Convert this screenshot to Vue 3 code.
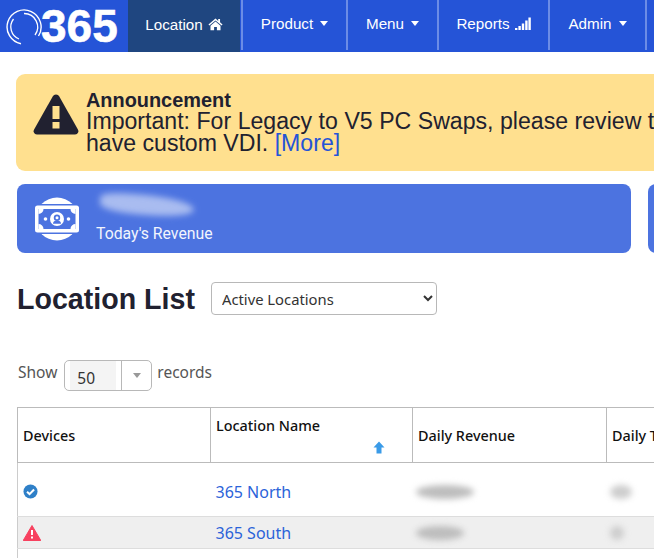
<template>
  <div class="page">
    <nav class="navbar">
      <div class="brand">
        <svg class="brand-ring" viewBox="6 6 36 36" width="36" height="36" fill="none" stroke="#fff">
          <path d="M21 40.700A17 17 0 1 1 38.500 33" stroke-width="1.400" />
          <path d="M24 10.500A13.500 13.500 0 0 1 35 32" stroke-width="1.300" />
          <path d="M13.500 16A13 13 0 0 0 19 36" stroke-width="1.300" />
        </svg>
        <span class="brand-text">365</span>
      </div>
      <template v-for="item in navItems" :key="item.label">
        <a class="nav-item" :class="{ active: item.active }" :style="{ width: item.width + 'px' }">
          {{ item.label }}
          <svg v-if="item.icon === 'home'" class="nav-icon" viewBox="0 0 16 14" width="15" height="13" fill="#fff">
            <path d="M8 0.600 0.400 7l1 1.100L8 2.600l6.600 5.500 1-1.100-2.700-2.300V1.200h-2v2.100z" />
            <path d="M8 3.900 2.600 8.400v4.900h3.900V9.700h3v3.600h3.900V8.400z" />
          </svg>
          <svg v-else-if="item.icon === 'signal'" class="nav-icon" viewBox="0 0 16 14" width="16" height="14" fill="#fff">
            <rect x="0" y="11" width="2.400" height="2" />
            <rect x="3.400" y="9" width="2.400" height="4" />
            <rect x="6.800" y="6.500" width="2.400" height="6.500" />
            <rect x="10.200" y="3.500" width="2.400" height="9.500" />
            <rect x="13.400" y="0.500" width="2.400" height="12.500" />
          </svg>
          <span v-else class="caret"></span>
        </a>
        <span v-if="item.active" class="nav-sep"></span>
      </template>
    </nav>

    <div class="content">
      <div class="announcement">
        <svg class="warn-icon" viewBox="0 0 46 42" width="46" height="42">
          <path d="M23 1.500c1.500 0 2.600.8 3.300 2l18.600 33c1.300 2.400-.3 5-3 5H4.100c-2.700 0-4.300-2.600-3-5l18.600-33c.7-1.200 1.800-2 3.300-2z" fill="#212130" />
          <rect x="19.500" y="13" width="7" height="13" fill="#ffe08f" />
          <rect x="19.500" y="29" width="7" height="6.500" fill="#ffe08f" />
        </svg>
        <div class="announcement-text">
          <strong>Announcement</strong>
          <p><span class="first-line">Important: For Legacy to V5 PC Swaps, please review t</span><br />have custom VDI. <a>[More]</a></p>
        </div>
      </div>

      <div class="stats">
        <div class="stat-card">
          <svg class="money-icon" viewBox="0 0 44 44" width="44" height="44">
            <circle cx="22" cy="22" r="21.500" fill="#fff" />
            <rect x="0" y="7" width="44" height="30" fill="#4c73e0" />
            <rect x="0" y="8.500" width="44" height="27" rx="2.500" fill="#fff" />
            <rect x="3.500" y="12" width="37" height="20" fill="#4c73e0" />
            <path d="M3.500 12h5a5 5 0 0 1-5 5zM40.500 12h-5a5 5 0 0 0 5 5zM3.500 32h5a5 5 0 0 0-5-5zM40.500 32h-5a5 5 0 0 1 5-5z" fill="#fff" />
            <circle cx="22" cy="22" r="7" fill="#fff" />
            <circle cx="22" cy="20.800" r="3.200" fill="#4c73e0" />
            <circle cx="22" cy="20.800" r="1.500" fill="#fff" />
            <path d="M18 26.800c0-2.600 1.600-3.400 4-3.400s4 .8 4 3.400z" fill="#4c73e0" />
            <circle cx="10.500" cy="22" r="1.800" fill="#fff" />
            <circle cx="33.500" cy="22" r="1.800" fill="#fff" />
          </svg>
          <div class="stat-body">
            <div class="stat-smear"></div>
            <div class="stat-label">Today's Revenue</div>
          </div>
        </div>
        <div class="stat-card"></div>
      </div>

      <div class="list-head">
        <h1>Location List</h1>
        <select class="status-select">
          <option>Active Locations</option>
        </select>
      </div>

      <div class="length-row">
        <span>Show</span>
        <div class="length-box">
          <span class="length-value">50</span>
          <span class="length-arrow"><i></i></span>
        </div>
        <span class="records">records</span>
      </div>
    </div>

    <table class="locations">
      <colgroup>
        <col class="col-devices" />
        <col class="col-name" />
        <col class="col-rev" />
        <col class="col-tx" />
      </colgroup>
      <thead>
        <tr>
          <th>Devices</th>
          <th class="sorted">
            Location Name
            <svg class="sort-arrow" viewBox="0 0 12 13" width="12" height="13" fill="#3a9be8">
              <path d="M6 0.500 11.500 6.500H8.500V12.500H3.500V6.500H0.500z" />
            </svg>
          </th>
          <th>Daily Revenue</th>
          <th>Daily T</th>
        </tr>
      </thead>
      <tbody>
        <tr v-for="row in rows" :key="row.name" :class="row.cls">
          <td>
            <svg v-if="row.ok" viewBox="0 0 16 16" width="15" height="15">
              <circle cx="8" cy="8" r="7.500" fill="#2f80c8" />
              <path d="M4.300 8.200 7 10.800 11.800 5.800" fill="none" stroke="#fff" stroke-width="2.200" />
            </svg>
            <svg v-else viewBox="0 0 18 16" width="18" height="16">
              <path d="M9 0.500 17.800 15.500H0.200z" fill="#f7415f" stroke="#f7415f" stroke-linejoin="round" />
              <rect x="8" y="5" width="2" height="5" fill="#fff" />
              <rect x="8" y="11.500" width="2" height="2" fill="#fff" />
            </svg>
          </td>
          <td><a>{{ row.name }}</a></td>
          <td><div class="smear" :style="{ width: row.rev + 'px' }"></div></td>
          <td><div class="smear small" :style="{ width: row.tx + 'px' }"></div></td>
        </tr>
        <tr class="row-blank"><td colspan="4"></td></tr>
      </tbody>
    </table>
  </div>
</template>

<script setup>
const navItems = [
  { label: 'Location', icon: 'home', active: true, width: 112 },
  { label: 'Product', width: 105 },
  { label: 'Menu', width: 91 },
  { label: 'Reports', icon: 'signal', width: 111 },
  { label: 'Admin', width: 97 }
]

const rows = [
  { name: '365 North', ok: true, cls: 'row-one', rev: 58, tx: 22 },
  { name: '365 South', ok: false, cls: 'row-two', rev: 48, tx: 14 }
]
</script>

<style>
html,
body {
  margin: 0;
  background: #fff;
  overflow: hidden;
}
</style>

<style scoped>
.page {
  width: 654px;
  height: 558px;
  overflow: hidden;
  font-family: "Liberation Sans", Arial, sans-serif;
  color: #212130;
}

.navbar {
  display: flex;
  height: 52px;
  background: #2554d7;
}

.brand {
  flex: 0 0 128px;
  display: flex;
  align-items: center;
  padding-left: 6px;
  box-sizing: border-box;
  color: #fff;
}

.brand-ring {
  flex: none;
  margin-top: 1px;
}

.brand-text {
  font-size: 46px;
  font-weight: 700;
  margin-left: -1px;
  -webkit-text-stroke: 0.6px #fff;
}

.nav-item {
  flex: none;
  box-sizing: border-box;
  height: 50px;
  padding-bottom: 3px;
  display: flex;
  align-items: center;
  justify-content: center;
  gap: 5px;
  color: #fff;
  font-size: 15.200px;
  border-right: 2px solid #6c8ce6;
}

.nav-item.active {
  height: 52px;
  border-right: none;
  background: #1f4680;
}

.nav-sep {
  flex: none;
  width: 2px;
  height: 50px;
  margin-left: 1px;
  background: #6c8ce6;
}

.nav-icon {
  flex: none;
}

.caret {
  width: 0;
  height: 0;
  margin-left: 2px;
  border-left: 4.500px solid transparent;
  border-right: 4.500px solid transparent;
  border-top: 5px solid #fff;
}

.content {
  padding: 22px 0 0 16px;
}

.announcement {
  box-sizing: border-box;
  width: 760px;
  height: 97px;
  display: flex;
  gap: 7px;
  padding: 16px 0 0 17px;
  background: #ffe08f;
  border-radius: 9px;
}

.warn-icon {
  flex: none;
  margin-top: 3px;
}

.announcement-text {
  white-space: nowrap;
}

.announcement-text strong {
  display: block;
  font-size: 19.900px;
  line-height: 20px;
}

.announcement-text p {
  margin: 0;
  font-size: 23.100px;
  line-height: 22px;
}

.first-line {
  word-spacing: 0.100px;
}

.announcement-text a {
  color: #2554d7;
}

.stats {
  display: flex;
  gap: 17px;
  margin: 13px 0 0 1px;
}

.stat-card {
  flex: 0 0 614px;
  box-sizing: border-box;
  height: 69px;
  display: flex;
  align-items: center;
  padding-left: 18px;
  background: #4c73e0;
  border-radius: 8px;
}

.money-icon {
  flex: none;
}

.stat-body {
  margin-left: 17px;
  color: #f2f5fd;
}

.stat-smear {
  width: 94px;
  height: 20px;
  margin-left: 4px;
  background: #a9bcf0;
  border-radius: 30% 70% 50% 50%;
  filter: blur(3px);
  transform: rotate(4deg);
}

.stat-label {
  margin-top: 9px;
  font-family: Roboto, sans-serif;
  font-size: 15.800px;
}

.list-head {
  display: flex;
  align-items: center;
  gap: 16px;
  height: 32px;
  margin: 30px 0 0 1px;
}

.list-head h1 {
  margin: 1px 0 0;
  font-size: 28.600px;
  font-weight: 700;
  color: #212130;
}

.status-select {
  width: 226px;
  height: 33px;
  margin-top: -1px;
  padding-left: 6px;
  background: #fff;
  border: 1px solid #b8b8b8;
  border-radius: 4px;
  font-family: "Noto Sans", sans-serif;
  font-size: 14.800px;
  color: #333;
}

.length-row {
  display: flex;
  align-items: center;
  gap: 7px;
  margin: 45px 0 0 2px;
  font-family: "Noto Sans", sans-serif;
  font-size: 15.500px;
  color: #555;
}

.length-row > span {
  position: relative;
  top: -4px;
}

.length-row > .records {
  margin-left: -2px;
}

.length-box {
  display: flex;
  box-sizing: border-box;
  width: 88px;
  height: 31px;
  border: 1px solid #b8b8b8;
  border-radius: 5px;
}

.length-value {
  flex: 0 0 46px;
  margin-left: 5px;
  padding: 6px 0 0 7px;
  box-sizing: border-box;
  background: #f4f4f4;
  font-size: 15.500px;
  color: #333;
}

.length-arrow {
  flex: 1;
  display: flex;
  align-items: center;
  justify-content: center;
  margin-left: 5px;
  border-left: 1px solid #b8b8b8;
}

.length-arrow i {
  border-left: 4px solid transparent;
  border-right: 4px solid transparent;
  border-top: 5px solid #999;
}

.locations {
  margin: 16px 0 0 17px;
  width: 800px;
  table-layout: fixed;
  border-collapse: collapse;
  font-family: "Noto Sans", sans-serif;
}

.col-devices {
  width: 193px;
}

.col-name {
  width: 202px;
}

.col-rev {
  width: 194px;
}

.locations th {
  height: 54px;
  padding: 0 0 0 5px;
  border: 1px solid #bbb;
  text-align: left;
  font-size: 14.400px;
  font-weight: 500;
  color: #111;
  white-space: nowrap;
}

.locations th.sorted {
  position: relative;
  box-sizing: border-box;
  padding-bottom: 20px;
}

.sort-arrow {
  position: absolute;
  right: 27px;
  bottom: 8px;
}

.locations td {
  padding: 0 0 0 5px;
  border-bottom: 1px solid #ddd;
  font-size: 16px;
}

.locations td:first-child {
  border-left: 1px solid #ccc;
}

.locations td svg {
  display: block;
}

.locations td a {
  color: #2b63d9;
}

.row-one td {
  height: 49px;
  padding-top: 4px;
}

.row-two td {
  height: 30px;
  padding-top: 1px;
  background: #efefef;
}

.row-blank td {
  height: 40px;
  border-bottom: none;
}

.smear {
  height: 14px;
  margin-left: -2px;
  background: #bdbdbd;
  border-radius: 50%;
  filter: blur(3px);
}

.smear.small {
  background: #cdcdcd;
}
</style>
